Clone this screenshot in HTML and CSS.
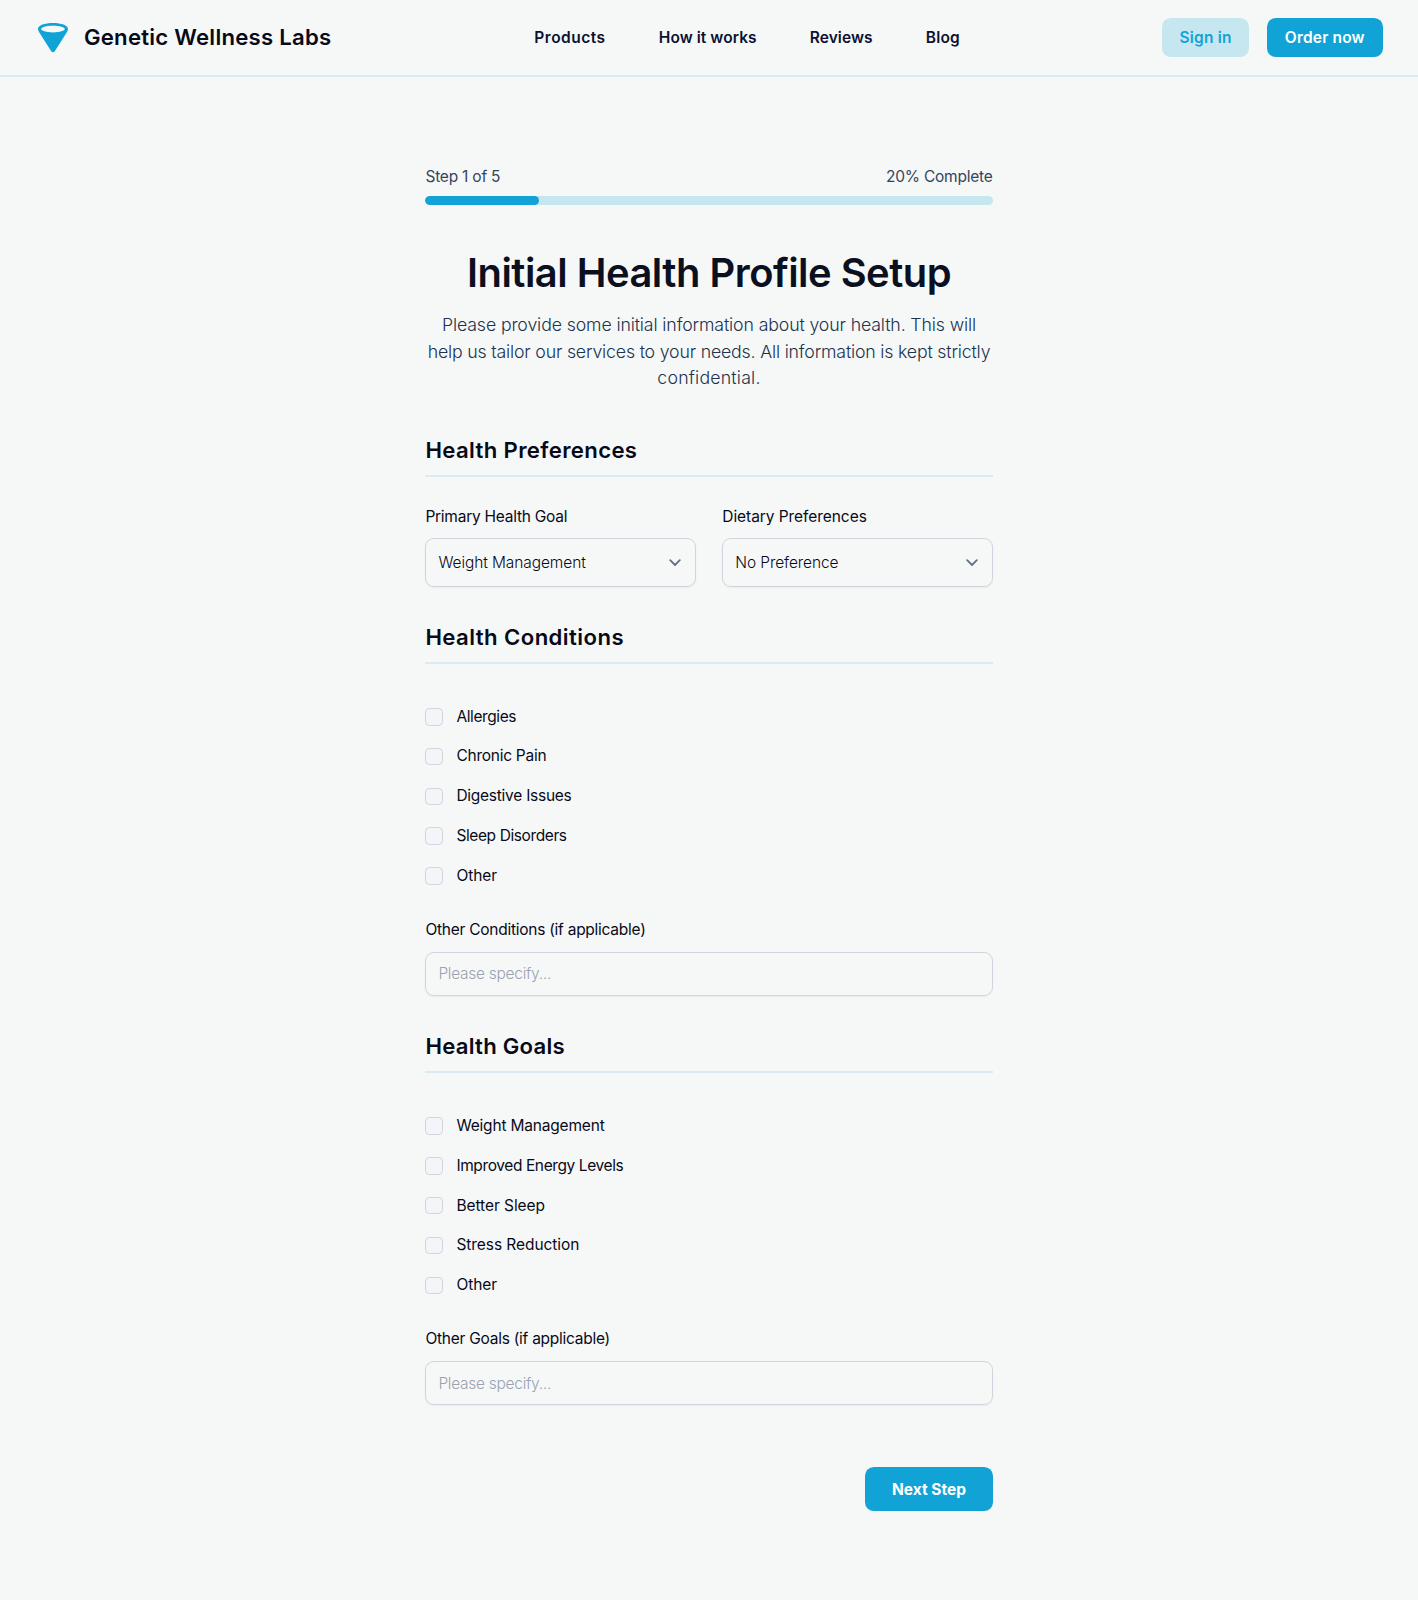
FILE: index.html
```
<!DOCTYPE html>
<html lang="en">
<head>
<meta charset="utf-8">
<title>Genetic Wellness Labs – Health Profile</title>
<link rel="stylesheet" href="styles.css">
</head>
<body>
<header class="header">
  <a class="brand">
    <svg class="brand-mark" viewBox="0 0 36 36" aria-hidden="true">
      <path fill="#12a3d6" fill-rule="evenodd" d="M18 3C9.500 3 3 5.300 3 9C3 10.100 3.400 11 4 12L16.200 31.300C17.100 32.600 18.900 32.600 19.800 31.300L32 12C32.600 11 33 10.100 33 9C33 5.300 26.500 3 18 3ZM18 5.800C24.800 5.800 29.800 7.300 29.800 9.100C29.800 10.900 24.800 12.400 18 12.400C11.200 12.400 6.200 10.900 6.200 9.100C6.200 7.300 11.200 5.800 18 5.800Z"/>
    </svg>
    <span class="brand-name">Genetic Wellness Labs</span>
  </a>
  <nav class="nav">
    <a class="track-wide">Products</a>
    <a class="track-near">How it works</a>
    <a class="track-near">Reviews</a>
    <a class="track-open">Blog</a>
  </nav>
  <div class="actions">
    <a class="button button-soft">Sign in</a>
    <a class="button button-primary">Order now</a>
  </div>
</header>

<main class="page">
  <div class="progress-labels"><span>Step 1 of 5</span><span>20% Complete</span></div>
  <div class="progress"><div class="progress-fill" style="width:20%"></div></div>

  <h1 class="title">Initial Health Profile Setup</h1>
  <p class="intro">
    <span class="intro-line">Please provide some initial information about your health. This will</span>
    <span class="intro-line track-tight">help us tailor our services to your needs. All information is kept strictly</span>
    <span class="intro-line track-open">confidential.</span>
  </p>

  <form>
    <section class="section">
      <h2 class="section-title section-title-long">Health Preferences</h2>
      <div class="fields">
        <div class="field">
          <label class="label track-tighter" for="goal">Primary Health Goal</label>
          <div class="select-wrap">
            <select class="control select" id="goal"><option>Weight Management</option></select>
            <svg class="chevron" viewBox="0 0 12 8" aria-hidden="true"><path d="M1.200 1.200L6 6l4.800-4.800"/></svg>
          </div>
        </div>
        <div class="field">
          <label class="label track-none" for="diet">Dietary Preferences</label>
          <div class="select-wrap">
            <select class="control select" id="diet"><option>No Preference</option></select>
            <svg class="chevron" viewBox="0 0 12 8" aria-hidden="true"><path d="M1.200 1.200L6 6l4.800-4.800"/></svg>
          </div>
        </div>
      </div>
    </section>

    <section class="section">
      <h2 class="section-title">Health Conditions</h2>
      <div class="checks">
        <label class="check"><input class="box" type="checkbox"><span class="track-tightest">Allergies</span></label>
        <label class="check"><input class="box" type="checkbox"><span class="track-tighter">Chronic Pain</span></label>
        <label class="check"><input class="box" type="checkbox"><span class="track-tighter">Digestive Issues</span></label>
        <label class="check"><input class="box" type="checkbox"><span class="track-tightest">Sleep Disorders</span></label>
        <label class="check"><input class="box" type="checkbox"><span class="track-none">Other</span></label>
      </div>
      <label class="label track-tighter" for="other-conditions">Other Conditions (if applicable)</label>
      <input class="control text-input" id="other-conditions" type="text" placeholder="Please specify...">
    </section>

    <section class="section">
      <h2 class="section-title section-title-short">Health Goals</h2>
      <div class="checks">
        <label class="check"><input class="box" type="checkbox"><span>Weight Management</span></label>
        <label class="check"><input class="box" type="checkbox"><span class="track-tightest">Improved Energy Levels</span></label>
        <label class="check"><input class="box" type="checkbox"><span class="track-none">Better Sleep</span></label>
        <label class="check"><input class="box" type="checkbox"><span class="track-none">Stress Reduction</span></label>
        <label class="check"><input class="box" type="checkbox"><span class="track-none">Other</span></label>
      </div>
      <label class="label track-tighter" for="other-goals">Other Goals (if applicable)</label>
      <input class="control text-input" id="other-goals" type="text" placeholder="Please specify...">
    </section>

    <div class="form-actions"><button class="next" type="button">Next Step</button></div>
  </form>
</main>
</body>
</html>
```
FILE: styles.css
```
:root {
  --bg: #f6f8f8;
  --ink: #080a18;
  --muted: #34455c;
  --brand: #12a3d6;
  --soft: #c6e7f0;
  --rule: #d9ebf3;
}

html { font-size: 17.725px; }
*, *::before, *::after { box-sizing: border-box; }

body {
  margin: 0;
  min-height: 1600px;
  background: var(--bg);
  color: var(--ink);
  font-family: Inter, "Liberation Sans", sans-serif;
  font-size: 0.875rem;
  line-height: 1.25rem;
}

/* Header */
.header {
  display: flex;
  align-items: center;
  justify-content: space-between;
  height: 77px;
  padding: 0 2rem;
  border-bottom: 2px solid var(--rule);
}
.brand { display: flex; align-items: center; gap: 12.5px; }
.brand-mark { width: 36px; height: 36px; }
.brand-name { font-size: 1.25rem; line-height: 1.75rem; font-weight: 600; letter-spacing: 0.011em; }
.nav { display: flex; gap: 3rem; padding: 2px 0 0 1px; font-weight: 600; color: #0b1230; }
.actions { display: flex; gap: 1rem; }
.button {
  height: 2.25rem;
  padding: 0 1rem;
  border-radius: 0.5rem;
  line-height: 2.25rem;
  font-weight: 600;
  letter-spacing: 0.012em;
}
.button-soft { background: var(--soft); color: var(--brand); }
.button-primary { background: var(--brand); color: #fff; }

/* Progress */
.page { width: 32rem; margin: 0 auto; padding: 89px 0 5rem; }
.progress-labels { display: flex; justify-content: space-between; color: var(--muted); letter-spacing: -0.014em; }
.progress { height: 0.5rem; margin-top: 8.2px; border-radius: 1rem; background: var(--soft); overflow: hidden; }
.progress-fill { height: 100%; border-radius: 1rem; background: var(--brand); }

/* Intro */
.title {
  margin: 45.3px 0 17.2px;
  font-size: 2.25rem;
  line-height: 2.5rem;
  font-weight: 600;
  letter-spacing: -0.0125em;
  text-align: center;
  color: #0b1020;
}
.intro {
  margin: 0;
  font-size: 1rem;
  line-height: 1.5rem;
  font-weight: 300;
  letter-spacing: -0.0072em;
  text-align: center;
  color: #20324e;
}
.intro-line { display: block; white-space: nowrap; }

/* Sections */
.section { padding-top: 2rem; }
.section:first-child { padding-top: 42.9px; }
.section-title {
  margin: 0;
  padding-bottom: 0.5rem;
  border-bottom: 2px solid var(--rule);
  font-size: 1.25rem;
  line-height: 1.75rem;
  font-weight: 600;
  letter-spacing: 0.019em;
}
.section-title-long { letter-spacing: 0.016em; }
.section-title-short { letter-spacing: 0.011em; }
.fields { display: grid; grid-template-columns: 1fr 1fr; gap: 1.5rem; padding-top: 29.2px; }
.label { display: block; letter-spacing: -0.012em; }
.select-wrap { position: relative; margin-top: 10.2px; }
.control {
  display: block;
  width: 100%;
  padding: 0 12px;
  border: 1px solid #d0d4dd;
  border-radius: 0.5rem;
  background: transparent;
  box-shadow: 0 1px 2px rgba(0, 0, 0, 0.05);
  color: var(--ink);
  font: 300 0.875rem Inter, "Liberation Sans", sans-serif;
  letter-spacing: -0.006em;
}
.select { height: 48.6px; appearance: none; }
.chevron {
  position: absolute;
  right: 14.5px;
  top: 21px;
  width: 12px;
  height: 8px;
  fill: none;
  stroke: #64708a;
  stroke-width: 1.8;
  stroke-linecap: round;
  stroke-linejoin: round;
}
.text-input { height: 44px; margin-top: 11px; }
.text-input::placeholder { color: #9aa2b2; letter-spacing: -0.018em; opacity: 1; }

/* Checkboxes */
.checks { display: grid; gap: 1rem; padding: 41.6px 0 31.5px; }
.check { display: flex; align-items: center; gap: 0.75rem; letter-spacing: -0.012em; }
.box {
  width: 1rem;
  height: 1rem;
  margin: 0;
  appearance: none;
  border: 1px solid #d0d4dd;
  border-radius: 0.25rem;
  background: #f3f5f8;
}

.form-actions { display: flex; justify-content: flex-end; padding-top: 3.5rem; }
.next {
  height: 2.5rem;
  padding: 0 1.5rem;
  border: 0;
  border-radius: 0.5rem;
  background: var(--brand);
  color: #fff;
  font: 700 0.875rem Inter, "Liberation Sans", sans-serif;
}

/* Tracking */
.track-wide { letter-spacing: 0.032em; }
.track-open { letter-spacing: 0.011em; }
.track-near { letter-spacing: 0.004em; }
.track-none { letter-spacing: -0.004em; }
.track-tight { letter-spacing: -0.01em; }
.track-tighter { letter-spacing: -0.0165em; }
.track-tightest { letter-spacing: -0.0255em; }
```
